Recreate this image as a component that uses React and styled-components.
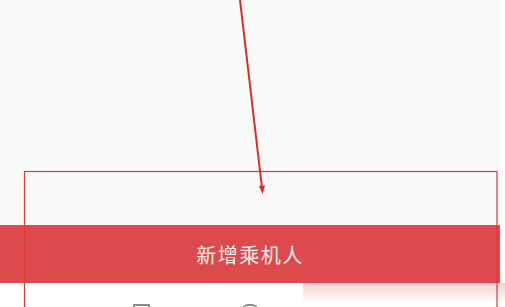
import React from "react";
import styled, { createGlobalStyle } from "styled-components";

const GlobalStyle = createGlobalStyle`
    html, body {
        margin: 0;
        padding: 0;
        background: #ffffff;
        overflow: hidden;
    }
    body {
        font-family: "Noto Sans CJK SC", "Noto Sans", sans-serif;
    }
`;

const Page = styled.div`
    position: relative;
    width: 505px;
    height: 307px;
    overflow: hidden;
    display: flex;
    flex-direction: column;
    background: #ffffff;
`;

const Screen = styled.div`
    width: 500px;
    display: flex;
    flex-direction: column;
`;

const Blank = styled.div`
    height: 225px;
    background: #f9f9f9;
`;

const AddButton = styled.button`
    height: 58px;
    border: none;
    margin: 0;
    padding: 0;
    background: #dd4a4d;
    color: #fbeeee;
    font-family: "Noto Sans CJK SC", "Noto Sans", sans-serif;
    font-size: 20px;
    letter-spacing: 1.5px;
    display: flex;
    align-items: center;
    justify-content: center;
`;

const TabBar = styled.div`
    position: relative;
    height: 24px;
    background: #ffffff;
    display: flex;
    padding-left: 133px;
    gap: 92px;
    align-items: flex-start;
`;

const Fade = styled.div`
    position: absolute;
    left: 303px;
    top: 0;
    width: 202px;
    height: 100%;
    background: linear-gradient(180deg, rgba(236, 170, 170, 0.55) 0%, rgba(255, 255, 255, 0) 85%);
`;

const TabIcon = styled.div`
    margin-top: 21px;
    width: ${(props) => props.w}px;
    height: 12px;
    border: 2px solid #8a8a8a;
    border-radius: ${(props) => (props.round ? "6px 6px 2px 2px" : "1px")};
    box-sizing: border-box;
`;

const Annotation = styled.svg`
    position: absolute;
    left: 0;
    top: 0;
    pointer-events: none;
`;

const App = () => {
    return (
        <Page>
            <GlobalStyle />
            <Screen>
                <Blank />
                <AddButton>新增乘机人</AddButton>
                <TabBar>
                    <TabIcon w={17} />
                    <TabIcon w={16} round />
                    <Fade />
                </TabBar>
            </Screen>
            <Annotation width="505" height="307" viewBox="0 0 505 307">
                <rect x="24.5" y="171.5" width="472.5" height="140" fill="none" stroke="#e03a33" strokeWidth="1.2" />
                <line x1="240" y1="0" x2="262" y2="188" stroke="#d82b22" strokeWidth="2" />
                <path d="M259 186 L262.5 194 L265 185.5 Z" fill="#d82b22" />
            </Annotation>
        </Page>
    );
};

export default App;
